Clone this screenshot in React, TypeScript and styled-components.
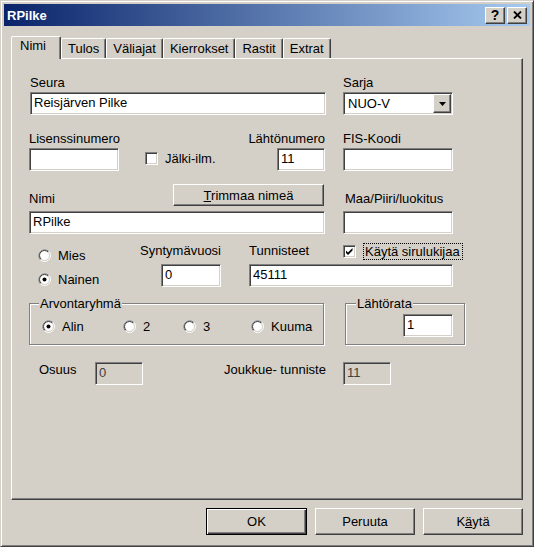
import React from 'react';
import styled, { createGlobalStyle, css } from 'styled-components';

const GlobalStyle = createGlobalStyle`
  html, body {
    margin: 0;
    padding: 0;
    background: #d4d0c8;
  }
  body {
    font-family: "Liberation Sans", Arial, sans-serif;
    font-size: 13px;
    color: #000;
  }
`;

const sunken = css`
  border: 1px solid;
  border-color: #808080 #fff #fff #808080;
  box-shadow: inset 1px 1px #404040, inset -1px -1px #d4d0c8;
`;

const raised = css`
  border: 1px solid;
  border-color: #fff #404040 #404040 #fff;
  box-shadow: inset -1px -1px #808080, inset 1px 1px #d4d0c8;
`;

const Window = styled.div`
  box-sizing: border-box;
  width: 534px;
  height: 547px;
  border: 1px solid;
  border-color: #d4d0c8 #404040 #404040 #d4d0c8;
  box-shadow: inset 1px 1px #fff, inset -1px -1px #808080;
  padding: 3px;
  background: #d4d0c8;
  display: flex;
  flex-direction: column;
`;

const TitleBar = styled.div`
  height: 22px;
  display: flex;
  align-items: center;
  padding: 0 2px 0 3px;
  background: linear-gradient(to right, #0a246a, #a6caf0);
`;

const TitleText = styled.div`
  flex: 1;
  color: #fff;
  font-weight: bold;
  font-size: 13px;
`;

const TitleButtons = styled.div`
  display: flex;
  gap: 2px;
  margin-right: 1px;
`;

const TitleButton = styled.div`
  ${raised};
  box-sizing: border-box;
  width: 20px;
  height: 17px;
  background: #d4d0c8;
  display: flex;
  align-items: center;
  justify-content: center;
  font-weight: bold;
  font-size: 14px;
  line-height: 14px;
`;

const TabStrip = styled.div`
  display: flex;
  align-items: flex-end;
  height: 22px;
  margin: 10px 0 0 7px;
`;

const Tab = styled.div<{ $active?: boolean }>`
  position: relative;
  z-index: ${(p) => (p.$active ? 1 : 0)};
  box-sizing: border-box;
  height: ${(p) => (p.$active ? 23 : 20)}px;
  margin-bottom: ${(p) => (p.$active ? -1 : 0)}px;
  padding: ${(p) => (p.$active ? '1px 14px 0 8px' : '2px 6px 0')};
  line-height: 16px;
  background: #d4d0c8;
  border-left: 1px solid #fff;
  border-top: 1px solid #fff;
  border-right: 1px solid #404040;
  border-radius: 2px 2px 0 0;
  box-shadow: inset -1px 0 #808080;
  white-space: nowrap;
`;

const Panel = styled.div`
  box-sizing: border-box;
  height: 442px;
  margin: 0 7px;
  border: 1px solid;
  border-color: #fff #404040 #404040 #fff;
  box-shadow: inset -1px -1px #808080;
  padding: 16px 0 0 17px;
`;

const Row = styled.div<{ $mt: number }>`
  display: flex;
  align-items: flex-start;
  margin-top: ${(p) => p.$mt}px;
`;

const FieldCol = styled.div<{ $w: number; $ml?: number; $end?: boolean }>`
  display: flex;
  flex-direction: column;
  width: ${(p) => p.$w}px;
  margin-left: ${(p) => p.$ml ?? 0}px;
  align-items: ${(p) => (p.$end ? 'flex-end' : 'stretch')};
`;

const Label = styled.span<{ $mb?: number; $pl?: number; $w?: number }>`
  line-height: 16px;
  white-space: nowrap;
  margin-bottom: ${(p) => p.$mb ?? 1}px;
  padding-left: ${(p) => p.$pl ?? 0}px;
  ${(p) => (p.$w ? `width: ${p.$w}px; flex: none;` : '')}
`;

const Edit = styled.div<{ $w?: number; $disabled?: boolean }>`
  ${sunken};
  box-sizing: border-box;
  height: 23px;
  width: ${(p) => (p.$w ? `${p.$w}px` : '100%')};
  padding: 1px 3px 0;
  line-height: 17px;
  white-space: nowrap;
  overflow: hidden;
  background: ${(p) => (p.$disabled ? '#d4d0c8' : '#fff')};
  color: ${(p) => (p.$disabled ? '#404040' : '#000')};
`;

const Combo = styled.div`
  ${sunken};
  box-sizing: border-box;
  height: 23px;
  display: flex;
  padding: 1px;
  background: #fff;
`;

const ComboText = styled.div`
  flex: 1;
  padding: 1px 0 0 3px;
  line-height: 17px;
`;

const DropButton = styled.div`
  ${raised};
  box-sizing: border-box;
  width: 18px;
  height: 19px;
  background: #d4d0c8;
  display: flex;
  align-items: center;
  justify-content: center;
`;

const Header = styled.div`
  display: flex;
  align-items: flex-end;
  justify-content: space-between;
  height: 27px;
`;

const Button = styled.div<{ $w: number; $h: number; $default?: boolean; $mb?: number; $mr?: number }>`
  box-sizing: border-box;
  width: ${(p) => p.$w}px;
  height: ${(p) => p.$h}px;
  margin-bottom: ${(p) => p.$mb ?? 0}px;
  margin-right: ${(p) => p.$mr ?? 0}px;
  display: flex;
  align-items: center;
  justify-content: center;
  background: #d4d0c8;
  white-space: nowrap;
  ${(p) =>
    p.$default
      ? css`
          border: 1px solid #000;
          box-shadow: inset 1px 1px #fff, inset -1px -1px #404040, inset -2px -2px #808080;
        `
      : raised}
`;

const CheckItem = styled.div<{ $ml?: number; $w?: number; $mb?: number }>`
  display: flex;
  align-items: center;
  gap: 7px;
  height: 16px;
  margin-left: ${(p) => p.$ml ?? 0}px;
  margin-bottom: ${(p) => p.$mb ?? 0}px;
  ${(p) => (p.$w ? `width: ${p.$w}px;` : '')}
  align-self: flex-end;
  white-space: nowrap;
`;

const Box = styled.div`
  ${sunken};
  box-sizing: border-box;
  width: 13px;
  height: 13px;
  flex: none;
  background: #fff;
  display: flex;
  align-items: center;
  justify-content: center;
`;

const FocusLabel = styled.span`
  border: 1px dotted #000;
  padding: 0 2px 0 1px;
  line-height: 15px;
`;

const RadioCol = styled.div<{ $ml: number; $w: number }>`
  display: flex;
  flex-direction: column;
  margin-left: ${(p) => p.$ml}px;
  width: ${(p) => p.$w}px;
`;

const RadioItem = styled.div<{ $h?: number; $w?: number }>`
  display: flex;
  align-items: center;
  gap: 7px;
  height: ${(p) => p.$h ?? 16}px;
  ${(p) => (p.$w ? `width: ${p.$w}px; flex: none;` : '')}
  white-space: nowrap;
`;

const GroupBox = styled.div<{ $w: number; $ml?: number; $pb: number }>`
  box-sizing: border-box;
  width: ${(p) => p.$w}px;
  margin-left: ${(p) => p.$ml ?? 0}px;
  border: 1px solid #808080;
  box-shadow: inset 1px 1px #fff, 1px 1px #fff;
  padding-bottom: ${(p) => p.$pb}px;
  display: flex;
  flex-direction: column;
`;

const Legend = styled.span<{ $ml: number }>`
  align-self: flex-start;
  margin: -8px 0 0 ${(p) => p.$ml}px;
  padding: 0 1px;
  line-height: 16px;
  background: #d4d0c8;
`;

const RadioRow = styled.div`
  display: flex;
  margin-top: 6px;
  padding-left: 12px;
`;

const Footer = styled.div`
  display: flex;
  justify-content: flex-end;
  gap: 8px;
  margin-top: 8px;
  padding-right: 7px;
`;

const U = styled.span`
  text-decoration: underline;
`;

const Radio = ({ checked }: { checked?: boolean }) => (
  <svg width="13" height="13" viewBox="0 0 13 13" style={{ flex: 'none' }}>
    <circle cx="6.5" cy="6.5" r="5" fill="#fff" />
    <circle cx="6.5" cy="6.5" r="6" fill="none" stroke="#fff" />
    <path d="M2.26 10.74 A6 6 0 0 1 10.74 2.26" fill="none" stroke="#808080" />
    <circle cx="6.5" cy="6.5" r="5" fill="none" stroke="#d4d0c8" />
    <path d="M2.96 10.04 A5 5 0 0 1 10.04 2.96" fill="none" stroke="#404040" />
    {checked && <circle cx="6.5" cy="6.5" r="2" fill="#000" />}
  </svg>
);

const Check = () => (
  <svg width="9" height="9" viewBox="0 0 9 9">
    <path d="M1 3.5 L3 5.5 L7.5 1 L7.5 3.5 L3 8 L1 6 Z" fill="#000" />
  </svg>
);

const App = () => {
  const tabs = ['Nimi', 'Tulos', 'Väliajat', 'Kierrokset', 'Rastit', 'Extrat'];

  return (
    <>
      <GlobalStyle />
      <Window>
        <TitleBar>
          <TitleText>RPilke</TitleText>
          <TitleButtons>
            <TitleButton>?</TitleButton>
            <TitleButton>
              <svg width="9" height="8" viewBox="0 0 9 8">
                <path d="M1 0.5 L8 7.5 M8 0.5 L1 7.5" stroke="#000" strokeWidth="1.8" />
              </svg>
            </TitleButton>
          </TitleButtons>
        </TitleBar>

        <TabStrip>
          {tabs.map((t, i) => (
            <Tab key={t} $active={i === 0}>
              {t}
            </Tab>
          ))}
        </TabStrip>

        <Panel>
          <Row $mt={0}>
            <FieldCol $w={296} $ml={1}>
              <Label>Seura</Label>
              <Edit>Reisjärven Pilke</Edit>
            </FieldCol>
            <FieldCol $w={110} $ml={17}>
              <Label>Sarja</Label>
              <Combo>
                <ComboText>NUO-V</ComboText>
                <DropButton>
                  <svg width="7" height="4" viewBox="0 0 7 4">
                    <path d="M0 0 H7 L3.5 4 Z" fill="#000" />
                  </svg>
                </DropButton>
              </Combo>
            </FieldCol>
          </Row>

          <Row $mt={16}>
            <FieldCol $w={90}>
              <Label>Lisenssinumero</Label>
              <Edit />
            </FieldCol>
            <CheckItem $ml={26} $w={100} $mb={5}>
              <Box />
              <span>Jälki-ilm.</span>
            </CheckItem>
            <FieldCol $w={80} $end>
              <Label>Lähtönumero</Label>
              <Edit $w={48}>11</Edit>
            </FieldCol>
            <FieldCol $w={110} $ml={18}>
              <Label>FIS-Koodi</Label>
              <Edit />
            </FieldCol>
          </Row>

          <Row $mt={13}>
            <FieldCol $w={296}>
              <Header>
                <Label $mb={4}>Nimi</Label>
                <Button $w={151} $h={22} $mb={5} $mr={1}>
                  <span>
                    <U>T</U>rimmaa nimeä
                  </span>
                </Button>
              </Header>
              <Edit>RPilke</Edit>
            </FieldCol>
            <FieldCol $w={110} $ml={18}>
              <Header>
                <Label $mb={4} $pl={2}>
                  Maa/Piiri/luokitus
                </Label>
              </Header>
              <Edit />
            </FieldCol>
          </Row>

          <Row $mt={9}>
            <RadioCol $ml={9} $w={99}>
              <RadioItem $h={24}>
                <Radio />
                <span>Mies</span>
              </RadioItem>
              <RadioItem $h={24}>
                <Radio checked />
                <span>Nainen</span>
              </RadioItem>
            </RadioCol>
            <FieldCol $w={84} $end>
              <Label $mb={5}>Syntymävuosi</Label>
              <Edit $w={60}>0</Edit>
            </FieldCol>
            <FieldCol $w={204} $ml={28}>
              <Header style={{ height: 16, marginBottom: 5, justifyContent: 'flex-start' }}>
                <Label $mb={0} $w={94}>
                  Tunnisteet
                </Label>
                <CheckItem>
                  <Box>
                    <Check />
                  </Box>
                  <FocusLabel>Käytä sirulukijaa</FocusLabel>
                </CheckItem>
              </Header>
              <Edit>45111</Edit>
            </FieldCol>
          </Row>

          <Row $mt={12}>
            <GroupBox $w={295} $pb={10}>
              <Legend $ml={9}>Arvontaryhmä</Legend>
              <RadioRow>
                <RadioItem $w={81}>
                  <Radio checked />
                  <span>Alin</span>
                </RadioItem>
                <RadioItem $w={60}>
                  <Radio />
                  <span>2</span>
                </RadioItem>
                <RadioItem $w={68}>
                  <Radio />
                  <span>3</span>
                </RadioItem>
                <RadioItem>
                  <Radio />
                  <span>Kuuma</span>
                </RadioItem>
              </RadioRow>
            </GroupBox>
            <GroupBox $w={120} $ml={21} $pb={7}>
              <Legend $ml={10}>Lähtörata</Legend>
              <Edit $w={50} style={{ marginTop: 2, marginLeft: 57 }}>
                1
              </Edit>
            </GroupBox>
          </Row>

          <Row $mt={17}>
            <Label $w={56} style={{ marginLeft: 10 }}>
              Osuus
            </Label>
            <Edit $w={48} $disabled>
              0
            </Edit>
            <Label $w={119} style={{ marginLeft: 81 }}>
              Joukkue- tunniste
            </Label>
            <Edit $w={48} $disabled>
              11
            </Edit>
          </Row>
        </Panel>

        <Footer>
          <Button $w={101} $h={27} $default>
            OK
          </Button>
          <Button $w={100} $h={27}>
            Peruuta
          </Button>
          <Button $w={100} $h={27}>
            <span>
              K<U>ä</U>ytä
            </span>
          </Button>
        </Footer>
      </Window>
    </>
  );
};

export default App;
